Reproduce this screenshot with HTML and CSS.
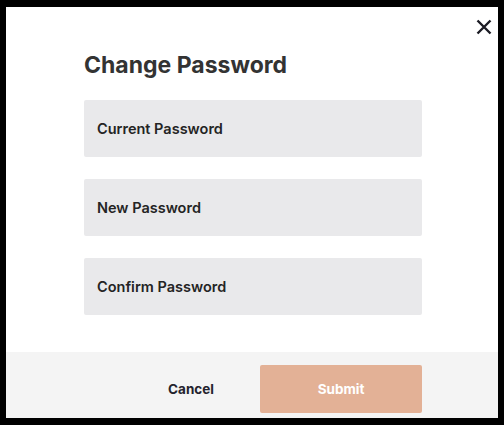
FILE: index.html
```html
<!DOCTYPE html>
<html>
<head>
<meta charset="utf-8">
<link rel="stylesheet" href="styles.css">
</head>
<body>
<div class="modal">
  <button class="close" aria-label="Close">
    <svg width="16" height="16" viewBox="0 0 16 16"><path d="M1.5 1.5 L14.5 14.5 M14.5 1.5 L1.5 14.5" stroke="#1b1b24" stroke-width="2.4" fill="none"/></svg>
  </button>
  <div class="content">
    <h1 class="title">Change Password</h1>
    <div class="field">Current Password</div>
    <div class="field">New Password</div>
    <div class="field">Confirm Password</div>
  </div>
  <div class="footer">
    <button class="cancel">Cancel</button>
    <button class="submit">Submit</button>
  </div>
</div>
</body>
</html>
```
FILE: styles.css
```css
html, body {
  margin: 0;
  padding: 0;
  background: #000;
  height: 100%;
}
body {
  padding: 7px 6px;
  box-sizing: border-box;
  font-family: Inter, "Noto Sans", sans-serif;
}
.modal {
  background: #fff;
  height: 411px;
  display: flex;
  flex-direction: column;
  position: relative;
}
.close {
  position: absolute;
  top: 11px;
  right: 5px;
  width: 18px;
  height: 18px;
  padding: 0;
  border: 0;
  background: none;
  display: flex;
  align-items: center;
  justify-content: center;
}
.content {
  flex: 1;
  padding: 43px 76px 0 78px;
}
.title {
  margin: 0 0 20px 0;
  font-size: 23px;
  font-weight: 700;
  color: #333;
  line-height: 30px;
  letter-spacing: 0;
}
.field {
  height: 57px;
  background: #e9e9eb;
  border-radius: 2px;
  margin-bottom: 22px;
  padding-left: 13px;
  display: flex;
  align-items: center;
  font-size: 14.5px;
  font-weight: 600;
  color: #242424;
}
.footer {
  height: 66px;
  background: #f4f4f4;
  display: flex;
  align-items: center;
  justify-content: flex-end;
  padding-right: 76px;
  gap: 8px;
  padding-top: 7px;
  box-sizing: border-box;
}
.cancel {
  width: 122px;
  height: 48px;
  border: 0;
  background: none;
  font-family: Inter, "Noto Sans", sans-serif;
  font-size: 13.5px;
  font-weight: 700;
  color: #24232d;
}
.submit {
  width: 162px;
  height: 48px;
  border: 0;
  border-radius: 2px;
  background: #e3b196;
  font-family: Inter, "Noto Sans", sans-serif;
  font-size: 13.5px;
  font-weight: 700;
  color: #fff;
}
```
